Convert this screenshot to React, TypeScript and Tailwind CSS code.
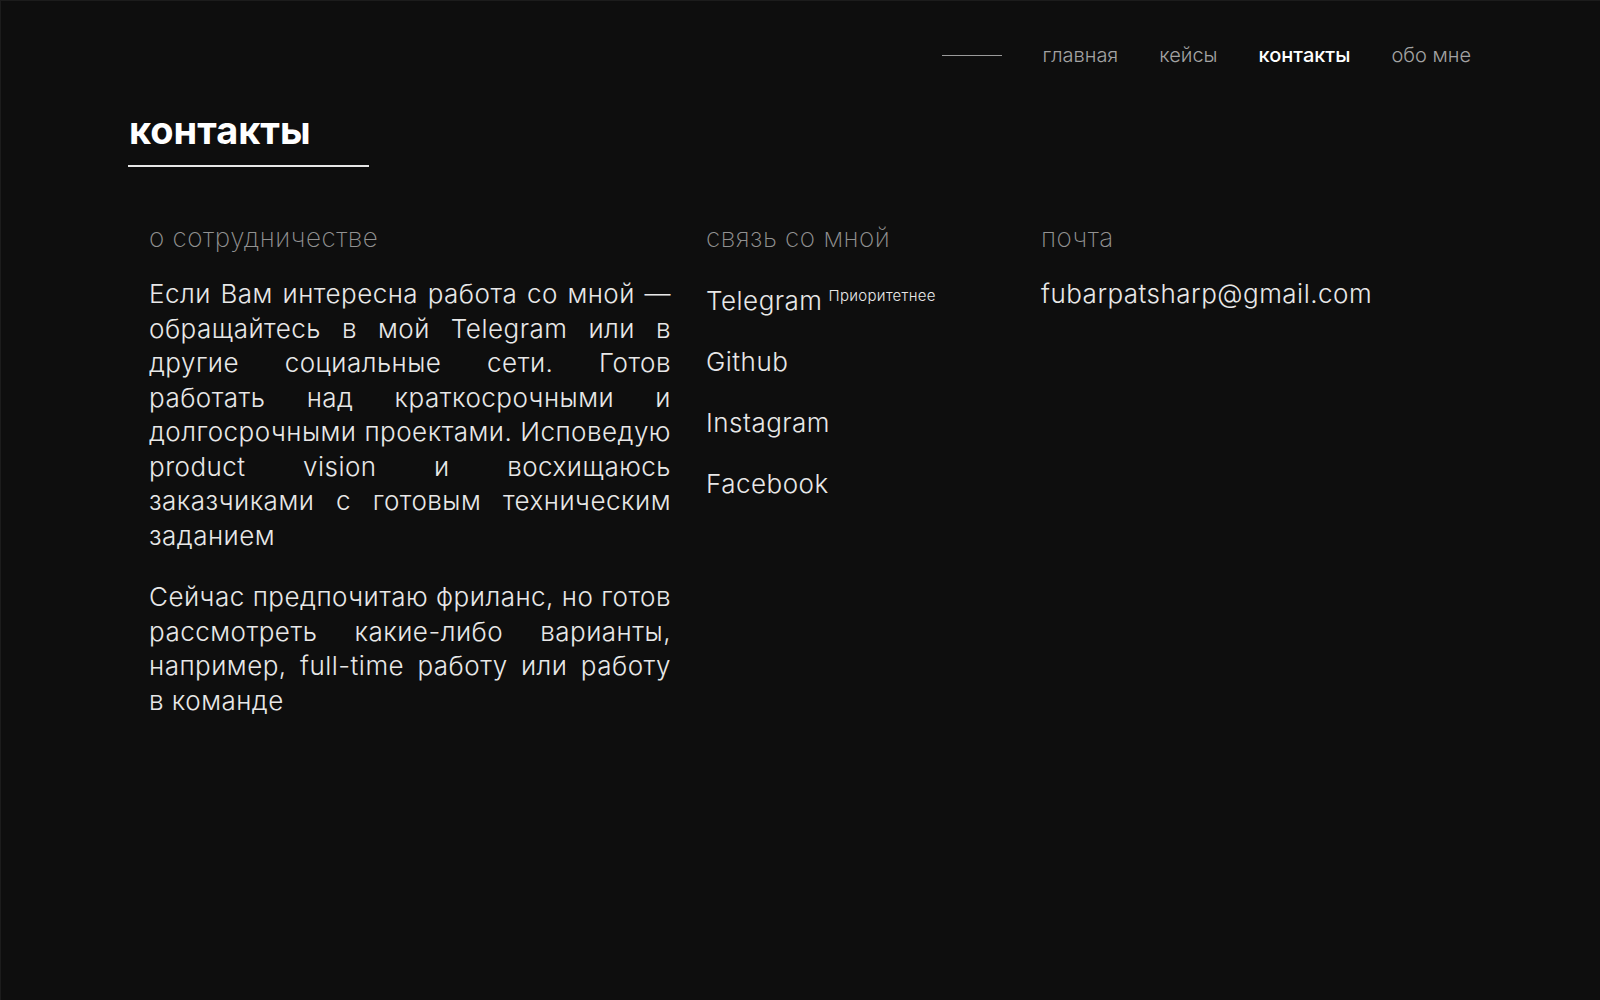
const nav = [
  { label: "главная", active: false },
  { label: "кейсы", active: false },
  { label: "контакты", active: true },
  { label: "обо мне", active: false },
];

const socials = ["Telegram", "Github", "Instagram", "Facebook"];

const about = [
  "Если Вам интересна работа со мной —",
  "обращайтесь в мой Telegram или в",
  "другие социальные сети. Готов",
  "работать над краткосрочными и",
  "долгосрочными проектами. Исповедую",
  "product vision и восхищаюсь",
  "заказчиками с готовым техническим",
  "заданием",
];

const now = [
  "Сейчас предпочитаю фриланс, но готов",
  "рассмотреть какие-либо варианты,",
  "например, full-time работу или работу",
  "в команде",
];

function Justified({ lines, className }: { lines: string[]; className: string }) {
  return (
    <p className={className}>
      {lines.map((line, i) => (
        <span
          key={i}
          className={
            i < lines.length - 1
              ? "block text-justify [text-align-last:justify]"
              : "block"
          }
        >
          {line}
        </span>
      ))}
    </p>
  );
}

export default function App() {
  return (
    <div
      className="min-h-screen w-full bg-[#0e0e0e] text-[#e8e8e8] border-t border-l border-[#1c1c1c]"
      style={{ fontFamily: '"Inter", "Noto Sans", sans-serif' }}
    >
      <header className="flex justify-end items-center gap-[41px] pt-[41px] pr-[129px]">
        <div className="w-[60px] h-px bg-[#9a9a9a]" />
        {nav.map((item) => (
          <a
            key={item.label}
            href="#"
            className={
              item.active
                ? "text-[20px] leading-[27px] font-medium text-white"
                : "text-[20px] leading-[27px] font-light text-[#a3a3a3]"
            }
          >
            {item.label}
          </a>
        ))}
      </header>

      <div className="pl-[127px] mt-[42px]">
        <h1 className="text-[38px] font-bold text-white leading-none pl-[1px] pb-[16px] border-b-2 border-[#e6e6e6] w-[241px]">
          контакты
        </h1>
      </div>

      <main className="grid grid-cols-[522px_300px_1fr] gap-x-[35px] pl-[148px] mt-[58px] tracking-[0.03em]">
        <section>
          <h2 className="text-[26px] font-extralight text-[#929292] leading-none tracking-[0.02em]">
            о сотрудничестве
          </h2>
          <Justified
            lines={about}
            className="mt-[26px] text-[26px] font-light leading-[34.5px]"
          />
          <Justified
            lines={now}
            className="mt-[27px] text-[26px] font-light leading-[34.5px]"
          />
        </section>

        <section>
          <h2 className="text-[26px] font-extralight text-[#929292] leading-none tracking-[0.02em]">
            связь со мной
          </h2>
          <ul className="mt-[32px] flex flex-col gap-[26px]">
            {socials.map((s) => (
              <li key={s} className="flex items-start">
                <a href="#" className="text-[26px] font-light leading-[35px]">
                  {s}
                </a>
                {s === "Telegram" && (
                  <span className="ml-[6px] mt-[5px] text-[15px] font-light leading-none tracking-[0.02em]">
                    Приоритетнее
                  </span>
                )}
              </li>
            ))}
          </ul>
        </section>

        <section>
          <h2 className="text-[26px] font-extralight text-[#929292] leading-none tracking-[0.02em]">
            почта
          </h2>
          <a
            href="mailto:fubarpatsharp@gmail.com"
            className="block mt-[26px] text-[26px] font-light leading-[34.5px]"
          >
            fubarpatsharp@gmail.com
          </a>
        </section>
      </main>
    </div>
  );
}
